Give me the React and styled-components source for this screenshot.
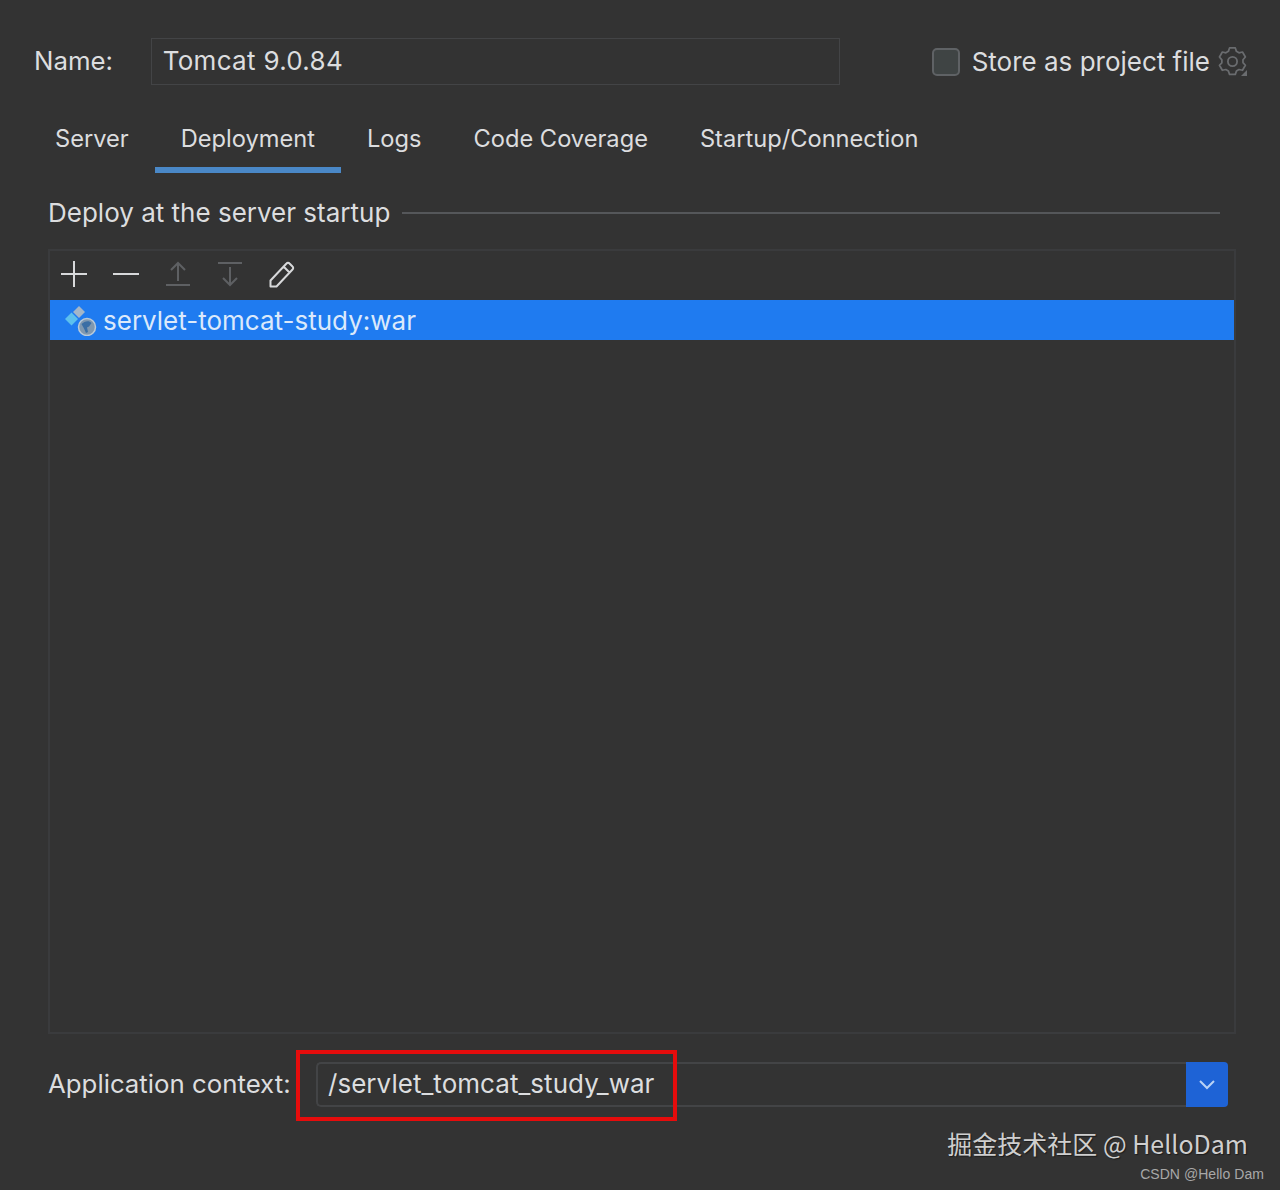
import React from "react";
import styled, { createGlobalStyle } from "styled-components";

const tabs = ["Server", "Deployment", "Logs", "Code Coverage", "Startup/Connection"];

const PlusIcon = () => (
  <svg width="28" height="28" viewBox="0 0 28 28" fill="none" stroke="#d8d9db" strokeWidth="2">
    <path d="M1 14h26M14 1v26" />
  </svg>
);

const MinusIcon = () => (
  <svg width="28" height="28" viewBox="0 0 28 28" fill="none" stroke="#d8d9db" strokeWidth="2">
    <path d="M1 14h26" />
  </svg>
);

const UpIcon = () => (
  <svg width="28" height="28" viewBox="0 0 28 28" fill="none" stroke="#5e6063" strokeWidth="2">
    <path d="M2 25h24M14 21V3M7 10l7-7 7 7" />
  </svg>
);

const DownIcon = () => (
  <svg width="28" height="28" viewBox="0 0 28 28" fill="none" stroke="#5e6063" strokeWidth="2">
    <path d="M2 3h24M14 7v18M7 18l7 7 7-7" />
  </svg>
);

const PencilIcon = () => (
  <svg width="28" height="28" viewBox="0 0 28 28" fill="none" stroke="#d8d9db" strokeWidth="2" strokeLinejoin="round">
    <path d="M2.5 20.5 18.5 3.5a2 2 0 0 1 3 0l3 3a2 2 0 0 1 0 3L8.5 26.5h-6zM15.5 6.5l6 6" />
  </svg>
);

const GearIcon = () => (
  <svg width="30" height="30" viewBox="0 0 30 30" fill="none">
    <path
      d="M11.5 2.5h6l1.2 3.6 2.6 1.5 3.7-.8 3 5.2-2.5 2.8v3l2.5 2.8-3 5.2-3.7-.8-2.6 1.5-1.2 3.6h-6l-1.2-3.6-2.6-1.5-3.7.8-3-5.2L3.5 18v-3L1 12l3-5.200 3.700.8 2.600-1.500z"
      stroke="#6a6c6f"
      strokeWidth="1.800"
      strokeLinejoin="round"
      transform="translate(0.5 -1.500) scale(0.96)"
    />
    <circle cx="14.500" cy="14.500" r="4.600" stroke="#6a6c6f" strokeWidth="1.800" />
    <path d="M29 23v6h-6z" fill="#6a6c6f" />
  </svg>
);

const ArtifactIcon = () => (
  <svg width="32" height="32" viewBox="0 0 32 32">
    <path d="M14 2l6 6-6 6-6-6z" fill="#a3b6c8" />
    <path d="M6.500 8.500 13 15l-6.500 6.500L0 15z" fill="#5cc0ee" />
    <circle cx="22" cy="23" r="8.500" fill="#7f98b0" stroke="#b9cad9" strokeWidth="1.500" />
    <path d="M16.500 20c3-3 7.500-4 10-1l-2.500 3.500-2 1 1 4.500-2 1-2-4.500z" fill="#3a6ea5" />
  </svg>
);

const ChevronIcon = () => (
  <svg width="18" height="12" viewBox="0 0 18 12" fill="none" stroke="#b9d2f5" strokeWidth="2">
    <path d="M2 2l7 7 7-7" />
  </svg>
);

const App = () => (
  <>
    <GlobalStyle />
    <Page>
      <NameRow>
        <NameLabel>Name:</NameLabel>
        <NameField>Tomcat 9.0.84</NameField>
        <StoreGroup>
          <Checkbox />
          <StoreLabel>Store as project file</StoreLabel>
          <GearIcon />
        </StoreGroup>
      </NameRow>

      <TabBar>
        {tabs.map((tab) => (
          <Tab key={tab} $active={tab === "Deployment"}>
            {tab}
          </Tab>
        ))}
      </TabBar>

      <SectionHeader>
        <SectionTitle>Deploy at the server startup</SectionTitle>
        <SectionLine />
      </SectionHeader>

      <ListPanel>
        <Toolbar>
          <PlusIcon />
          <MinusIcon />
          <UpIcon />
          <DownIcon />
          <PencilIcon />
        </Toolbar>
        <SelectedRow>
          <ArtifactIcon />
          <span>servlet-tomcat-study:war</span>
        </SelectedRow>
      </ListPanel>

      <ContextRow>
        <ContextLabel>Application context:</ContextLabel>
        <ContextField>
          <HighlightBox />
          <ContextValue>/servlet_tomcat_study_war</ContextValue>
          <DropdownButton>
            <ChevronIcon />
          </DropdownButton>
        </ContextField>
      </ContextRow>

      <Watermark>
        <WatermarkMain>掘金技术社区 @ HelloDam</WatermarkMain>
        <WatermarkSub>CSDN @Hello Dam</WatermarkSub>
      </Watermark>
    </Page>
  </>
);

const GlobalStyle = createGlobalStyle`
  body {
    margin: 0;
    background: #333333;
    font-family: Inter, "Noto Sans CJK SC", sans-serif;
    color: #dcdddf;
  }
`;

const Page = styled.div`
  position: relative;
  width: 1280px;
  height: 1190px;
  box-sizing: border-box;
  padding-top: 38px;
  overflow: hidden;
  background: #333333;
`;

const NameRow = styled.div`
  display: flex;
  align-items: center;
  padding: 0 32px 0 34px;
`;

const NameLabel = styled.div`
  width: 117px;
  margin-top: -2px;
  font-size: 25.800px;
`;

const NameField = styled.div`
  width: 689px;
  height: 47px;
  flex: none;
  box-sizing: border-box;
  padding-left: 11px;
  border: 1px solid #434446;
  font-size: 26px;
  line-height: 43px;
  letter-spacing: 0.3px;
`;

const StoreGroup = styled.div`
  display: flex;
  align-items: center;
  margin-left: 92px;
  white-space: nowrap;
`;

const Checkbox = styled.div`
  width: 28px;
  height: 28px;
  flex: none;
  box-sizing: border-box;
  border: 2px solid #5f6265;
  border-radius: 5px;
  background: #3f4444;
`;

const StoreLabel = styled.div`
  margin: 0 8px 0 12px;
  font-size: 26px;
`;

const TabBar = styled.div`
  display: flex;
  margin: 28px 0 0 29px;
`;

const Tab = styled.div`
  height: 60px;
  box-sizing: border-box;
  padding: 0 26px;
  border-bottom: 6px solid ${(p) => (p.$active ? "#4a88c7" : "transparent")};
  font-size: 23.650px;
  line-height: 52px;
`;

const SectionHeader = styled.div`
  display: flex;
  align-items: center;
  gap: 12px;
  margin: 24px 60px 0 48px;
`;

const SectionTitle = styled.div`
  font-size: 26px;
  line-height: 32px;
`;

const SectionLine = styled.div`
  flex: 1;
  height: 2px;
  background: #55575a;
`;

const ListPanel = styled.div`
  width: 1188px;
  height: 785px;
  box-sizing: border-box;
  margin: 20px 0 0 48px;
  border: 2px solid #3a3b3d;
`;

const Toolbar = styled.div`
  display: flex;
  align-items: center;
  gap: 24px;
  height: 45px;
  padding: 0 0 4px 10px;
`;

const SelectedRow = styled.div`
  display: flex;
  align-items: center;
  gap: 6px;
  height: 40px;
  padding-left: 15px;
  background: #1f7bf0;
  color: #dbe9fb;
  font-size: 26px;
`;

const ContextRow = styled.div`
  display: flex;
  align-items: center;
  margin: 28px 52px 0 48px;
`;

const ContextLabel = styled.div`
  width: 268px;
  margin-top: -2px;
  font-size: 25.800px;
`;

const ContextField = styled.div`
  position: relative;
  display: flex;
  flex: 1;
  height: 45px;
`;

const HighlightBox = styled.div`
  position: absolute;
  top: -12px;
  left: -20px;
  width: 381px;
  height: 71px;
  box-sizing: border-box;
  border: 4px solid #e60c0c;
`;

const ContextValue = styled.div`
  flex: 1;
  box-sizing: border-box;
  padding-left: 10px;
  border: 2px solid #434446;
  border-right: none;
  border-radius: 5px 0 0 5px;
  font-size: 26px;
  line-height: 39px;
  letter-spacing: 0.04px;
`;

const DropdownButton = styled.div`
  display: flex;
  align-items: center;
  justify-content: center;
  width: 42px;
  border-radius: 0 4px 4px 0;
  background: #1e63d6;
`;

const Watermark = styled.div`
  position: absolute;
  right: 16px;
  bottom: 7px;
  display: flex;
  flex-direction: column;
  align-items: flex-end;
`;

const WatermarkMain = styled.div`
  margin-right: 16px;
  font-family: "Noto Sans CJK SC", sans-serif;
  font-size: 25px;
  line-height: 34px;
  color: #cfcfcf;
  text-shadow: 1px 1px 1px #1c1c1c;
`;

const WatermarkSub = styled.div`
  margin-top: 5px;
  font-family: "Liberation Sans", sans-serif;
  font-size: 14px;
  line-height: 18px;
  letter-spacing: 0.05px;
  color: #a8a8a8;
`;

export default App;
